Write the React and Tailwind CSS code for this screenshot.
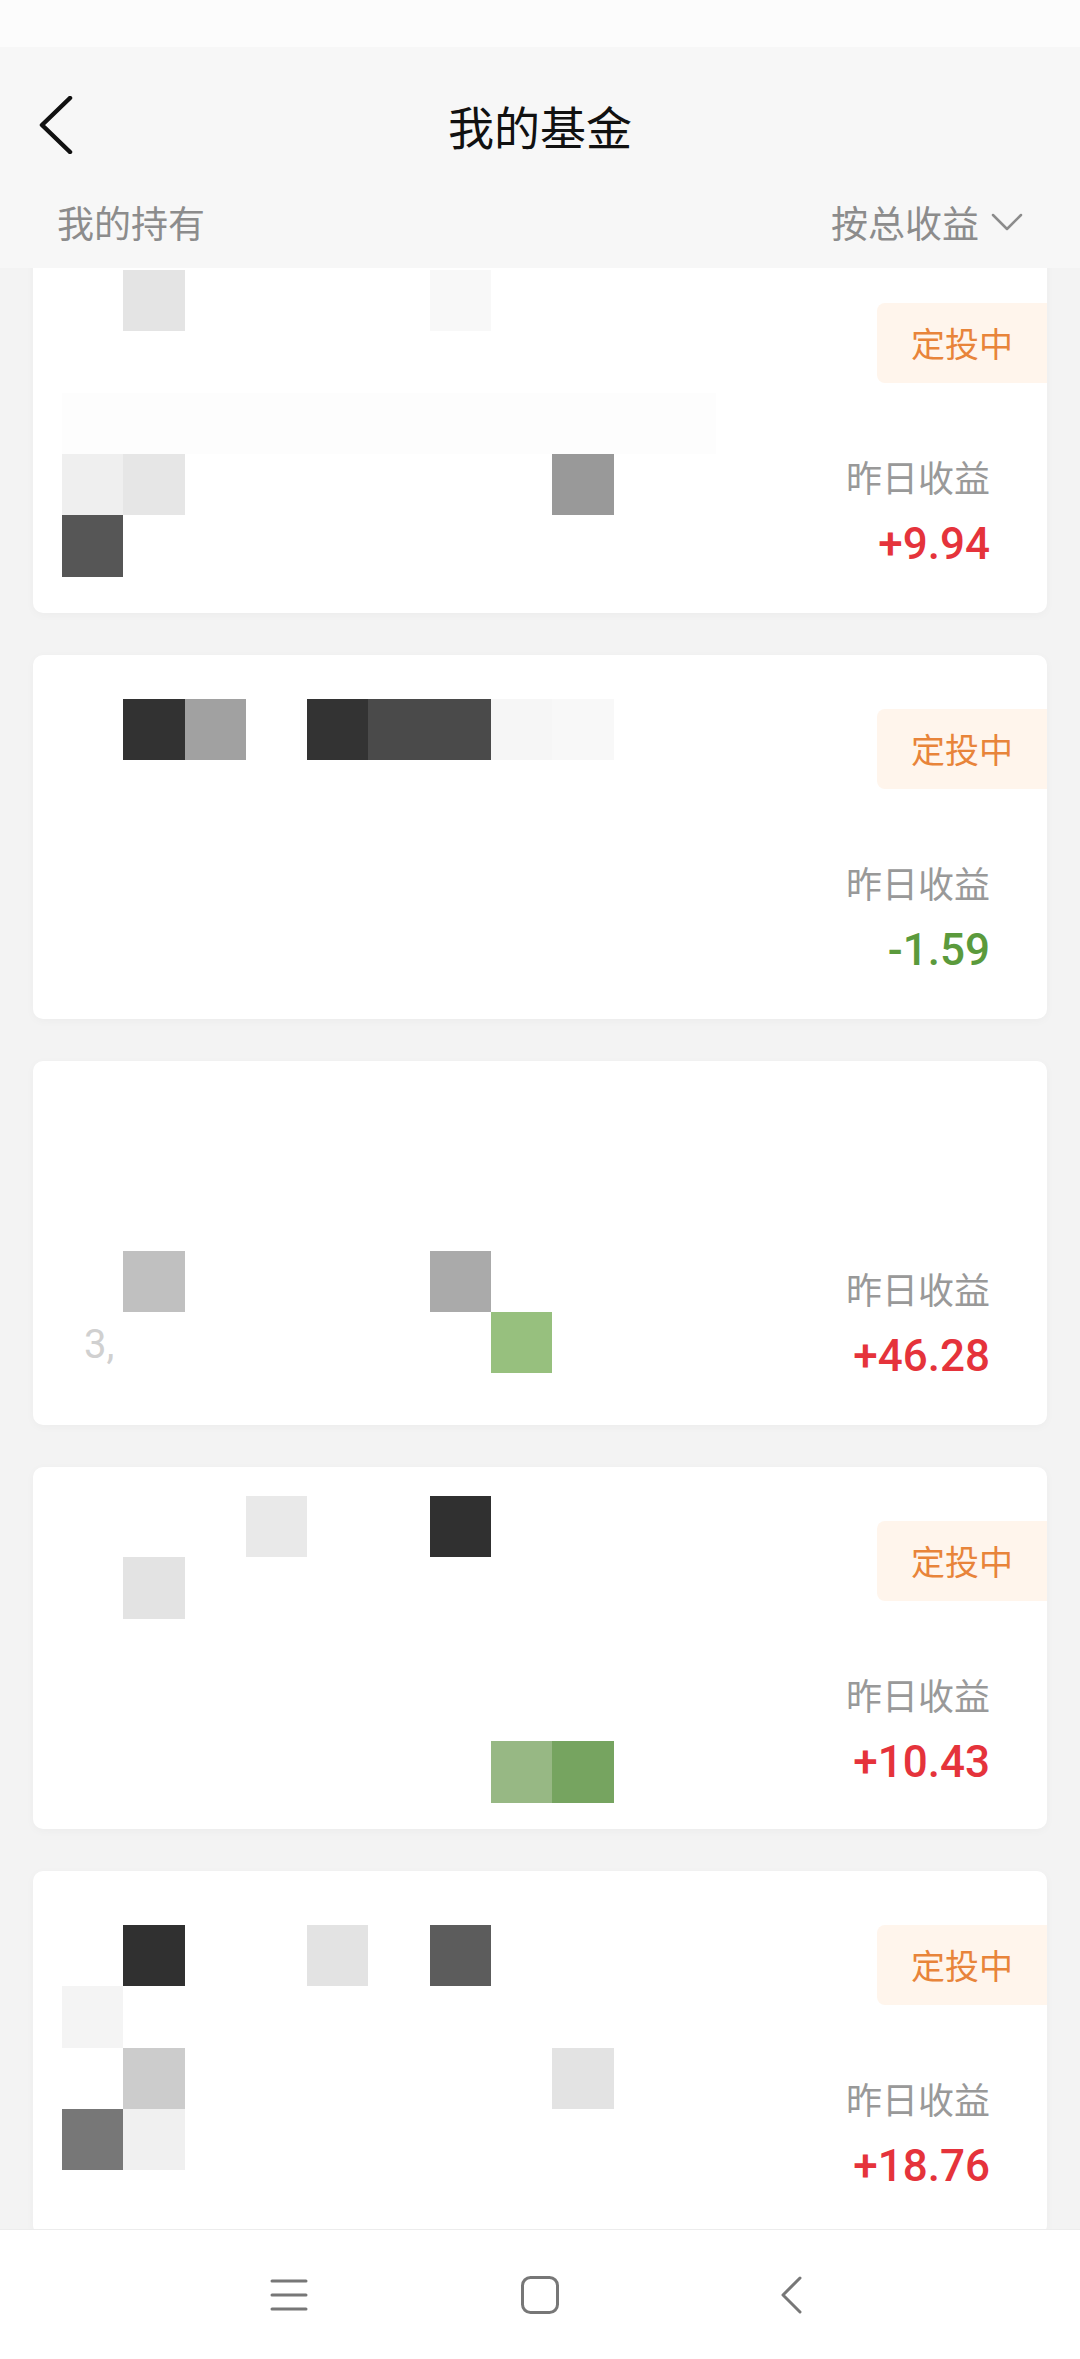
import React from "react";

const cards = [
  { badge: true, value: "+9.94", up: true, h: "h-[364px]" },
  { badge: true, value: "-1.59", up: false, h: "h-[364px]" },
  { badge: false, value: "+46.28", up: true, h: "h-[364px]" },
  { badge: true, value: "+10.43", up: true, h: "h-[362px]" },
  { badge: true, value: "+18.76", up: true, h: "h-[364px]" },
];

// mosaic redaction cells: [col, row, colour]
const cells = [
  [2, 0, "#e4e4e4"], [7, 0, "#f8f8f8"], [1, 3, "#efefef"], [2, 3, "#e6e6e6"], [9, 3, "#999999"], [1, 4, "#565656"],
  [2, 7, "#323232"], [3, 7, "#a1a1a1"], [5, 7, "#333333"], [6, 7, "#4a4a4a"], [7, 7, "#4a4a4a"], [8, 7, "#f6f6f6"], [9, 7, "#f8f8f8"],
  [2, 16, "#c0c0c0"], [7, 16, "#aaaaaa"], [8, 17, "#97c07e"],
  [4, 20, "#e9e9e9"], [7, 20, "#303030"], [2, 21, "#e3e3e3"], [8, 24, "#97b884"], [9, 24, "#76a460"],
  [2, 27, "#303030"], [5, 27, "#e3e3e3"], [7, 27, "#5c5c5c"], [1, 28, "#f4f4f4"], [2, 29, "#cccccc"], [9, 29, "#e3e3e3"], [1, 30, "#777777"], [2, 30, "#f0f0f0"],
];

const STEP = 61.3;
const cx = (c) => Math.round(0.7 + STEP * c);
const cy = (r) => Math.round(270 + STEP * r);

function Card({ badge, value, up, h }) {
  return (
    <div className={`${h} shrink-0 rounded-[10px] bg-white shadow-[0_2px_10px_rgba(0,0,0,0.03)] flex justify-end`}>
      <div className="flex flex-col items-end pt-[54px]">
        {badge ? (
          <div className="h-[80px] w-[170px] rounded-l-[8px] bg-[#fff5ec] flex items-center justify-center text-[34px] leading-none text-[#e8843a]">
            定投中
          </div>
        ) : (
          <div className="h-[80px]" />
        )}
        <div className="mr-[57px] mt-[71px] flex flex-col items-end">
          <div className="text-[36px] leading-[44px] text-[#999999]">昨日收益</div>
          <div
            className={`mt-[21px] font-['Roboto'] font-medium text-[44px] leading-[50px] ${
              up ? "text-[#e5333b]" : "text-[#5b9a3c]"
            }`}
          >
            {value}
          </div>
        </div>
      </div>
    </div>
  );
}

export default function App() {
  return (
    <div className="relative w-[1080px] h-[2359px] overflow-hidden bg-[#f3f3f3] font-['Noto_Sans_CJK_SC',sans-serif] flex flex-col">
      {/* header */}
      <div className="shrink-0 bg-[#f7f7f7]">
        <div className="h-[47px] bg-[#fcfcfc]" />
        <div className="h-[156px] grid grid-cols-[1fr_auto_1fr] items-center">
          <div className="pl-[38px] flex items-center">
            <svg width="36" height="58" viewBox="0 0 36 58" fill="none">
              <path d="M32 2 L4 29 L32 56" stroke="#111" strokeWidth="4.5" strokeLinecap="round" strokeLinejoin="round" />
            </svg>
          </div>
          <div className="text-[46px] leading-none text-[#111111]">我的基金</div>
          <div />
        </div>
        <div className="h-[65px] px-[57px] flex items-start justify-between text-[37px] leading-[38px] text-[#8c8c8c]">
          <span>我的持有</span>
          <span className="flex items-center gap-[12px]">
            按总收益
            <svg width="32" height="18" viewBox="0 0 32 18" fill="none">
              <path d="M2 2 L16 16 L30 2" stroke="#8c8c8c" strokeWidth="2.5" strokeLinecap="round" strokeLinejoin="round" />
            </svg>
          </span>
        </div>
      </div>

      {/* list */}
      <div className="flex-1 overflow-hidden">
        <div className="-mt-[19px] px-[33px] flex flex-col gap-[42px]">
          {cards.map((c, i) => (
            <Card key={i} {...c} />
          ))}
        </div>
      </div>

      {/* nav bar */}
      <div className="h-[130px] shrink-0 bg-white border-t border-[#ececec] flex items-center justify-center gap-[213px]">
        <svg width="38" height="34" viewBox="0 0 38 34" fill="none">
          <path d="M2 3 H36 M2 17 H36 M2 31 H36" stroke="#777" strokeWidth="3" strokeLinecap="round" />
        </svg>
        <svg width="38" height="38" viewBox="0 0 38 38" fill="none">
          <rect x="1.5" y="1.5" width="35" height="35" rx="8" stroke="#777" strokeWidth="3" />
        </svg>
        <svg width="38" height="38" viewBox="0 0 38 38" fill="none">
          <path d="M28 2 L11 19 L28 36" stroke="#777" strokeWidth="3" strokeLinecap="round" strokeLinejoin="round" />
        </svg>
      </div>

      {/* redaction mosaic over the list */}
      <div className="pointer-events-none absolute inset-0">
        <div className="absolute left-[62px] top-[393px] w-[654px] h-[61px] bg-[#fdfdfd]" />
        {cells.map(([c, r, col], i) => (
          <div
            key={i}
            className="absolute"
            style={{ left: cx(c), top: cy(r), width: cx(c + 1) - cx(c), height: cy(r + 1) - cy(r), background: col }}
          />
        ))}
        <div className="absolute left-[84px] top-[1325px] text-[40px] leading-none text-[#d0d0d0] font-['Roboto']">3,</div>
      </div>
    </div>
  );
}
